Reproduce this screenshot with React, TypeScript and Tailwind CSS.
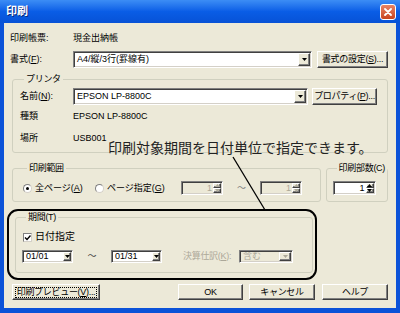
import React from 'react';

const sunken =
  'border border-t-[#808080] border-l-[#808080] border-b-white border-r-white shadow-[inset_1px_1px_0_#404040,inset_-1px_-1px_0_#d4d0c8]';
const raised =
  'bg-[#ECE9D8] border border-t-white border-l-white border-b-[#404040] border-r-[#404040] shadow-[inset_-1px_-1px_0_#808080]';

function Tri({ up = false, color = '#000' }: { up?: boolean; color?: string }) {
  return (
    <svg width="5" height="3" viewBox="0 0 5 3">
      <polygon points={up ? '0,3 5,3 2.5,0' : '0,0 5,0 2.5,3'} fill={color} />
    </svg>
  );
}

function Combo({
  w,
  text,
  disabled = false,
  small = false,
}: {
  w: string;
  text: string;
  disabled?: boolean;
  small?: boolean;
}) {
  return (
    <div
      className={`flex h-full items-stretch p-[1px] ${w} ${sunken} ${
        disabled ? 'bg-[#ECE9D8] text-[#ACA899]' : 'bg-white'
      }`}
    >
      <span className="flex flex-1 items-center overflow-hidden pl-[2px]">{text}</span>
      <div className={`flex items-center justify-center ${small ? 'w-[8px]' : 'w-[12px]'} ${raised}`}>
        <Tri color={disabled ? '#ACA899' : '#000'} />
      </div>
    </div>
  );
}

function Spin({ w, disabled = false }: { w: string; disabled?: boolean }) {
  return (
    <div
      className={`flex h-full items-stretch p-[1px] ${w} ${sunken} ${
        disabled ? 'bg-[#ECE9D8] text-[#ACA899]' : 'bg-white'
      }`}
    >
      <span className="flex flex-1 items-center justify-end pr-[1px]">1</span>
      <div className="flex w-[8px] flex-col">
        <div className={`flex flex-1 items-center justify-center ${raised}`}>
          <Tri up color={disabled ? '#ACA899' : '#000'} />
        </div>
        <div className={`flex flex-1 items-center justify-center ${raised}`}>
          <Tri color={disabled ? '#ACA899' : '#000'} />
        </div>
      </div>
    </div>
  );
}

function Btn({ w, children, extra = '' }: { w: string; children: React.ReactNode; extra?: string }) {
  return (
    <div className={`flex h-full items-center justify-center tracking-[-0.3px] ${w} ${raised} ${extra}`}>
      {children}
    </div>
  );
}

function Radio({ checked }: { checked: boolean }) {
  return (
    <div className="flex h-[9px] w-[9px] items-center justify-center rounded-full border border-t-[#808080] border-l-[#808080] border-b-[#d4d0c8] border-r-[#d4d0c8] bg-white">
      {checked && <div className="h-[3px] w-[3px] rounded-full bg-black" />}
    </div>
  );
}

function Group({ label, className, children }: { label: string; className: string; children: React.ReactNode }) {
  return (
    <fieldset className={`rounded-[3px] border border-[#D0D0BF] ${className}`}>
      <legend className="ml-[4px] px-[2px] text-[9px] leading-[10px] tracking-[-0.3px]">{label}</legend>
      {children}
    </fieldset>
  );
}

export default function App() {
  return (
    <div className="flex h-[313px] w-[400px] flex-col whitespace-nowrap bg-[#0B52D8] font-['Liberation_Sans','Noto_Sans_CJK_JP',sans-serif] text-[9px] leading-none text-black">
      {/* title bar */}
      <div className="flex h-[23px] items-center bg-gradient-to-b from-[#3C8DF5] via-[#0A5DE6] to-[#0752D6] pl-[6px] pr-[4px]">
        <span className="flex-1 text-[11px] font-bold text-white [text-shadow:1px_1px_0_#0a2a80]">印刷</span>
        <div className="flex h-[16px] w-[16px] items-center justify-center rounded-[3px] border border-white bg-gradient-to-b from-[#E98363] to-[#C8431C]">
          <svg width="8" height="8" viewBox="0 0 8 8">
            <path d="M1 1 L7 7 M7 1 L1 7" stroke="#fff" strokeWidth="1.8" strokeLinecap="round" />
          </svg>
        </div>
      </div>

      <div className="relative mx-[4px] mb-[5px] flex-1 bg-[#ECE9D8] pl-[6px] pr-[8px]">
        <div className="mt-[8px] flex h-[14px] items-center">
          <span className="w-[63px]">印刷帳票:</span>
          <span>現金出納帳</span>
        </div>

        <div className="mt-[6px] flex h-[17px] items-center">
          <span className="w-[63px]">
            書式(<u>F</u>):
          </span>
          <Combo w="w-[239px]" text="A4/縦/3行(罫線有)" />
          <div className="ml-[5px] h-full">
            <Btn w="w-[71px]">
              書式の設定(<u>S</u>)...
            </Btn>
          </div>
        </div>

        <Group label="プリンタ" className="ml-[2px] mt-[6px] w-[376px] px-[7px] pb-[7px]">
          <div className="mt-[4px] flex h-[17px] items-center">
            <span className="w-[53px]">
              名前(<u>N</u>):
            </span>
            <Combo w="w-[235px]" text="EPSON LP-8800C" />
            <div className="ml-[4px] h-full">
              <Btn w="w-[65px]">
                プロパティ(<u>P</u>)...
              </Btn>
            </div>
          </div>
          <div className="mt-[4px] flex h-[14px] items-center">
            <span className="w-[53px]">種類</span>
            <span>EPSON LP-8800C</span>
          </div>
          <div className="mt-[8px] flex h-[14px] items-center">
            <span className="w-[53px]">場所</span>
            <span>USB001</span>
          </div>
        </Group>

        <div className="ml-[2px] mt-[10px] flex">
          <Group label="印刷範囲" className="w-[310px] pb-[6px] pl-[10px]">
            <div className="mt-[8px] flex h-[14px] items-center">
              <div className="flex w-[72px] items-center">
                <Radio checked />
                <span className="ml-[3px]">
                  全ページ(<u>A</u>)
                </span>
              </div>
              <div className="flex w-[86px] items-center">
                <Radio checked={false} />
                <span className="ml-[3px]">
                  ページ指定(<u>G</u>)
                </span>
              </div>
              <Spin w="w-[42px]" disabled />
              <span className="w-[37px] text-center text-[#808080]">～</span>
              <Spin w="w-[42px]" disabled />
            </div>
          </Group>
          <Group label="印刷部数(C)" className="ml-[5px] w-[61px] pb-[6px] pl-[6px]">
            <div className="mt-[8px] flex h-[14px] items-center">
              <Spin w="w-[43px]" />
            </div>
          </Group>
        </div>

        <Group label="期間(T)" className="ml-[5px] mt-[10px] w-[298px] pb-[9px] pl-[6px]">
          <div className="mt-[9px] flex h-[12px] items-center pl-[1px]">
            <div className="flex h-[9px] w-[9px] items-center justify-center border border-t-[#808080] border-l-[#808080] border-b-[#d4d0c8] border-r-[#d4d0c8] bg-white">
              <svg width="7" height="7" viewBox="0 0 7 7">
                <path d="M1 3.5 L3 5.5 L6.5 1.5" stroke="#000" strokeWidth="1.4" fill="none" />
              </svg>
            </div>
            <span className="ml-[3px] text-[10px]">日付指定</span>
          </div>
          <div className="mt-[7px] flex h-[13px] items-center">
            <Combo w="w-[51px]" text="01/01" small />
            <span className="w-[38px] text-center text-[#444]">～</span>
            <Combo w="w-[51px]" text="01/31" small />
            <span className="ml-[21px] w-[56px] tracking-[-0.3px] text-[#ACA899]">
              決算仕訳(<u>K</u>):
            </span>
            <Combo w="w-[54px]" text="含む" disabled />
          </div>
        </Group>

        <div className="ml-[2px] mt-[11px] flex h-[16px]">
          <Btn w="w-[88px]" extra="border-black">
            <span className="border border-dotted border-black px-[1px]">
              印刷プレビュー(<u>V</u>)...
            </span>
          </Btn>
          <div className="ml-[78px] h-full">
            <Btn w="w-[65px]">OK</Btn>
          </div>
          <div className="ml-[6px] h-full">
            <Btn w="w-[66px]">キャンセル</Btn>
          </div>
          <div className="ml-[7px] h-full">
            <Btn w="w-[66px]">ヘルプ</Btn>
          </div>
        </div>

        {/* annotation callout */}
        <span className="absolute left-[104px] top-[117px] font-['Noto_Sans_CJK_JP',sans-serif] text-[14px] leading-[14px] text-[#222]">
          印刷対象期間を日付単位で指定できます。
        </span>
        <svg className="pointer-events-none absolute left-0 top-0" width="392" height="285">
          <line x1="229" y1="134" x2="261" y2="187" stroke="#000" strokeWidth="1.3" />
          <rect x="4" y="187" width="308" height="69" rx="10" ry="10" fill="none" stroke="#000" strokeWidth="2" />
        </svg>
      </div>
    </div>
  );
}
